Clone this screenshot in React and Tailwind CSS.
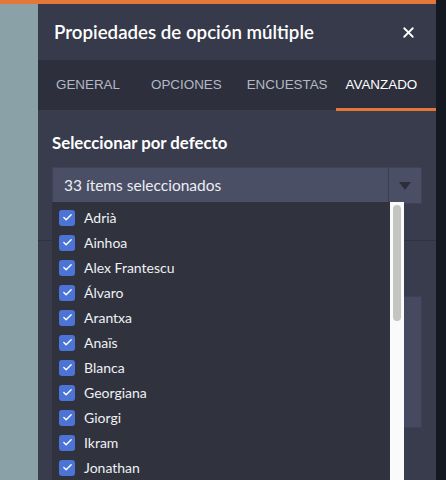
import { Check, X } from "lucide-react";

const names = [
  "Adrià",
  "Ainhoa",
  "Alex Frantescu",
  "Álvaro",
  "Arantxa",
  "Anaïs",
  "Blanca",
  "Georgiana",
  "Giorgi",
  "Ikram",
  "Jonathan",
];

export default function App() {
  return (
    <div className="flex h-[480px] w-[446px] overflow-hidden bg-[#141821] font-['Lato',sans-serif]">
      <div className="flex w-[436px] shrink-0 flex-col">
        {/* top bar */}
        <div className="h-[4px] shrink-0 bg-[#e3773a]" />

        <div className="flex flex-1">
          <div className="w-[38px] shrink-0 bg-[#8aa2a7]" />

          {/* PANEL */}
          <div className="relative flex flex-1 flex-col bg-[#393c4d]">
            <div className="flex h-[56px] shrink-0 items-center justify-between bg-[#363a4a] pl-[16px] pr-[19px]">
              <h1 className="text-[18.7px] font-semibold text-white">
                Propiedades de opción múltiple
              </h1>
              <X className="h-[17px] w-[17px] text-white" strokeWidth={2.6} />
            </div>

            <div className="flex h-[50px] shrink-0 items-center bg-[#2d303c] pl-[18px] font-['Liberation_Sans',sans-serif] text-[13.4px] text-[#b4b8c5]">
              <div className="flex h-full items-center">GENERAL</div>
              <div className="ml-[31px] flex h-full items-center">OPCIONES</div>
              <div className="ml-[25px] flex h-full items-center">ENCUESTAS</div>
              <div className="relative ml-[8px] flex h-full flex-1 items-center pl-[10px] text-white">
                AVANZADO
                <div className="absolute bottom-[-1px] left-0 h-[3px] w-full bg-[#e3773a]" />
              </div>
            </div>

            <div className="flex flex-col px-[14px] pt-[23px]">
              <p className="text-[16.8px] font-bold leading-[20px] text-white">Seleccionar por defecto</p>

              <div className="mt-[14px] flex h-[37px] border border-[#3f4356] bg-[#4b4f66]">
                <div className="flex flex-1 items-center pl-[11px] text-[15.5px] text-[#eceef3]">
                  33 ítems seleccionados
                </div>
                <div className="flex w-[33px] items-center justify-center border-l border-[#3a3d4f]">
                  <div className="h-0 w-0 border-x-[6px] border-t-[8px] border-x-transparent border-t-[#2b2e3b]" />
                </div>
              </div>
            </div>

            {/* content behind dropdown */}
            <div className="mt-[36px] border-t border-[#2f3241]" />
            <div className="px-[14px] pt-[55px]">
              <div className="h-[132px] border border-[#3d4155] bg-[#454a60]" />
            </div>

            {/* DROPDOWN */}
            <div className="absolute left-[14px] top-[198px] flex h-[290px] w-[352px] bg-[#30333e]">
              <div className="flex flex-1 flex-col pt-[3px]">
                {names.map((name) => (
                  <div key={name} className="flex h-[25px] shrink-0 items-center pl-[7px]">
                    <div className="flex h-[16px] w-[16px] items-center justify-center rounded-[3px] bg-[#4b74d6]">
                      <Check className="h-[11px] w-[11px] text-white" strokeWidth={3} />
                    </div>
                    <span className="ml-[9px] text-[14px] text-[#eef0f4]">{name}</span>
                  </div>
                ))}
              </div>
              <div className="w-[14px] shrink-0 bg-[#fafafa] px-[3px] pt-[3px]">
                <div className="h-[116px] rounded-full bg-[#c4c5c1]" />
              </div>
            </div>
          </div>
        </div>
      </div>
      <div className="w-[10px] shrink-0 bg-[#141821]" />
    </div>
  );
}
